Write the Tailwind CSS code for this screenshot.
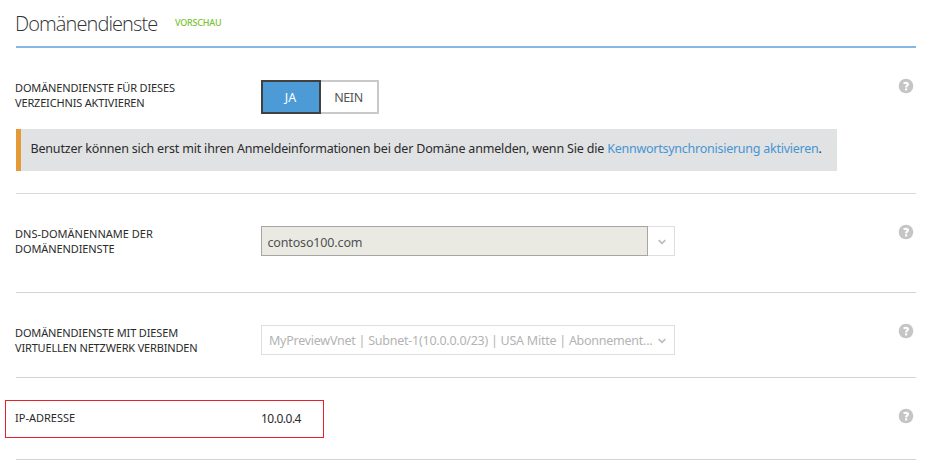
<!DOCTYPE html>
<html lang="de">
<head>
<meta charset="utf-8">
<title>Domänendienste</title>
<script src="https://cdn.jsdelivr.net/npm/@tailwindcss/browser@4"></script>
</head>
<body class="relative h-[474px] overflow-hidden bg-white pl-4 pr-[14px] font-['Noto_Sans','Open_Sans',sans-serif] text-[12.5px] text-[#2b2b2b]">
<svg class="hidden">
  <symbol id="help" viewBox="0 0 16 16">
    <circle cx="8" cy="8" r="7.3" fill="#c5c5c5"/>
    <path d="M5.700 5.700C6.200 5 7 4.700 7.900 4.700c1.300 0 2.100.6 2.100 1.500 0 1.300-1.900 1.500-1.900 3.200" fill="none" stroke="#fff" stroke-width="2.100"/>
    <rect x="7" y="10.400" width="2.200" height="2" fill="#fff"/>
  </symbol>
  <symbol id="chevron" viewBox="0 0 10 8">
    <path d="M1.700 2.200 5 5.400 8.300 2.200" fill="none" stroke="#bdbdbd" stroke-width="1.700"/>
  </symbol>
</svg>

<header class="flex h-12 items-start border-b-2 border-[#85b8e4] whitespace-nowrap">
  <h1 class="-ml-px w-[160px] pt-[10px] text-[20px] leading-7 font-light tracking-[-0.9px] text-[#333] font-['Open_Sans']">Domänendienste</h1>
  <span class="pt-[15px] text-[9px] leading-4 font-medium tracking-[-0.22px] text-[#7ac22f]">VORSCHAU</span>
</header>

<section class="h-[146px] border-b border-[#d9d9d9] pt-8">
  <div class="flex h-[34px]">
    <div class="-ml-px w-[246px] text-[11px] leading-[15px] whitespace-nowrap">
      <div class="tracking-[-0.14px]">DOMÄNENDIENSTE FÜR DIESES</div>
      <div class="tracking-[-0.17px]">VERZEICHNIS AKTIVIEREN</div>
    </div>
    <div class="flex">
      <div class="flex w-[60px] items-center justify-center border-2 border-[#404040] bg-[#4c9bd7] pt-[2px] pr-px text-white">JA</div>
      <div class="flex w-[58px] items-center justify-center border-2 border-l-0 border-[#c9c9c9] pt-[2px] pr-px text-[#555] tracking-[-0.4px]">NEIN</div>
    </div>
    <svg class="ml-auto mr-[2px] -mt-[2px] size-4"><use href="#help"/></svg>
  </div>
  <div class="mt-[15px] flex h-[42px] w-[821px] items-center border-l-[5px] border-[#e59a38] bg-[#e1e2e4] pb-px pl-[9.5px] whitespace-pre"><span class="tracking-[-0.18px]">Benutzer können sich erst mit ihren Anmeldeinformationen bei der Domäne anmelden, wenn Sie die </span><a class="tracking-[-0.25px] text-[#4595d3]">Kennwortsynchronisierung aktivieren</a>.</div>
</section>

<section class="flex h-[99px] border-b border-[#d4d4d4] pt-8">
  <div class="-ml-px w-[246px] text-[11px] leading-[15px] whitespace-nowrap">
    <div>DNS-DOMÄNENNAME DER</div>
    <div class="tracking-[-0.1px]">DOMÄNENDIENSTE</div>
  </div>
  <div class="flex h-[30px]">
    <div class="flex w-[387px] items-center border border-[#a6a6a6] bg-[#eaeae3] pt-1 pl-[5.5px] tracking-[-0.15px] text-[#505050]">contoso100.com</div>
    <div class="flex w-[27px] items-center justify-center border border-l-0 border-[#dedede]"><svg class="mt-[2px] ml-px h-2 w-[10px]"><use href="#chevron"/></svg></div>
  </div>
  <svg class="ml-auto mr-[2px] -mt-[2px] size-4"><use href="#help"/></svg>
</section>

<section class="flex h-[85px] border-b border-[#d4d4d4] pt-8">
  <div class="-ml-px w-[246px] text-[11px] leading-[15px] whitespace-nowrap">
    <div class="tracking-[-0.14px]">DOMÄNENDIENSTE MIT DIESEM</div>
    <div class="tracking-[-0.17px]">VIRTUELLEN NETZWERK VERBINDEN</div>
  </div>
  <div class="flex h-[30px] w-[414px] items-center justify-between border border-[#dedede] pt-[2px] pr-[7px] pl-[7px] text-[#b3b3b3]">
    <span class="tracking-[-0.25px] whitespace-nowrap">MyPreviewVnet | Subnet-1(10.0.0.0/23) | USA Mitte | Abonnement...</span>
    <svg class="h-2 w-[10px]"><use href="#chevron"/></svg>
  </div>
  <svg class="ml-auto mr-[2px] -mt-[2px] size-4"><use href="#help"/></svg>
</section>

<section class="flex h-[82px] items-start border-b border-[#d4d4d4] pt-[30px]">
  <div class="-ml-px w-[246px] pt-[2px] text-[11px] leading-[15px]">IP-ADRESSE</div>
  <div class="pt-[3px] text-[12px] leading-4 tracking-[-0.5px]">10.0.0.4</div>
  <svg class="ml-auto mr-[2px] size-4"><use href="#help"/></svg>
</section>
<div class="absolute top-[400px] left-[5px] h-[38px] w-[319px] border border-[#e8202a]"></div>
</body>
</html>
